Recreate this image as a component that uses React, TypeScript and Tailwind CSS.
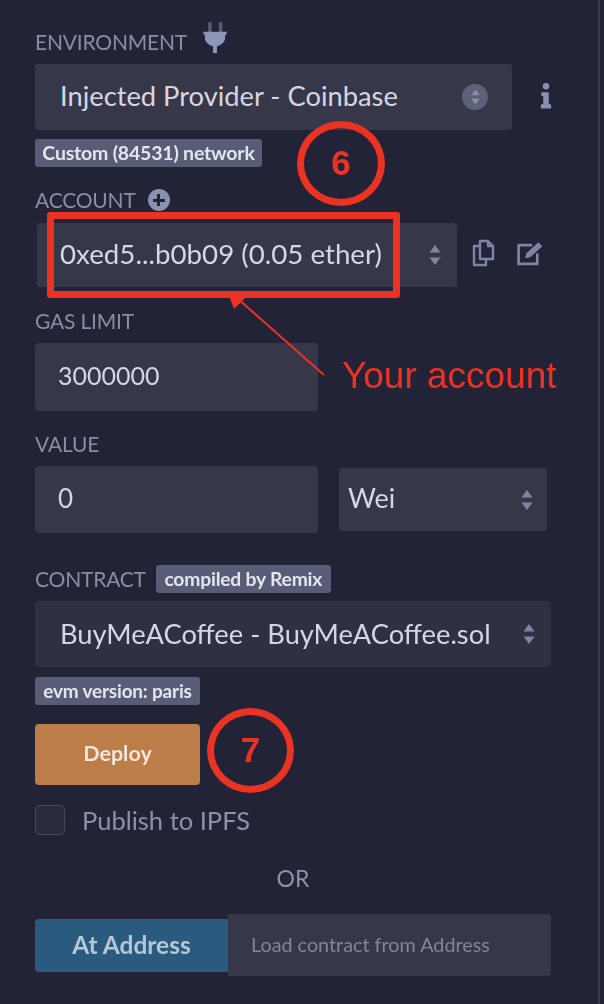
import React from 'react';

const font = "font-['Lato','Noto_Sans',sans-serif]";

const Arrows = ({ className = '' }: { className?: string }) => (
  <svg viewBox="0 0 12 24" className={`w-[12px] h-[24px] ${className}`} fill="#7f84a3">
    <path d="M6 2 L11.5 9.5 H0.5 Z" />
    <path d="M6 22 L11.5 14.5 H0.5 Z" />
  </svg>
);

const Label = ({ children }: { children: React.ReactNode }) => (
  <span className="text-[21px] leading-[24px] text-[#8a8da3] tracking-[-0.2px]">{children}</span>
);

const Badge = ({ children, className = '' }: { children: React.ReactNode; className?: string }) => (
  <span className={`flex items-center justify-center h-[28px] rounded-[3px] bg-[#595c76] text-[#e4e5ee] font-bold tracking-[-0.2px] ${className}`}>
    {children}
  </span>
);

const App = () => {
  return (
    <div className={`relative flex w-[604px] h-[1004px] overflow-hidden bg-[#222336] ${font}`}>
      {/* the panel, slightly soft like the upscaled capture */}
      <div className="flex flex-col pl-[35px] pt-[22px] w-[598px] h-full blur-[0.7px]">
        <div className="flex items-center h-[40px]">
          <Label>ENVIRONMENT</Label>
          <svg viewBox="0 0 24 32" className="ml-[16px] w-[24px] h-[31px] mb-[9px]" fill="#8f96bb">
            <rect x="5" y="0" width="3.5" height="11" rx="1.5" fill="#5a5d7a" />
            <rect x="16" y="0" width="3.5" height="11" rx="1.5" fill="#5a5d7a" />
            <path d="M0 10 H24 V13 H22.5 V16 C22.5 21 18 24 14 25 V32 H10 V25 C6 24 1.5 21 1.5 16 V13 H0 Z" />
          </svg>
        </div>

        <div className="flex items-center mt-[2px]">
          <div className="flex items-center justify-between w-[477px] h-[66px] pl-[25px] pr-[24px] bg-[#363749] rounded-[3px]">
            <span className="pb-[2px] text-[27.3px] text-[#d6d7e2]">Injected Provider - Coinbase</span>
            <span className="flex items-center justify-center w-[26px] h-[26px] rounded-full bg-[#5e6179]">
              <svg viewBox="0 0 12 24" className="w-[11px] h-[20px]" fill="#8c90ab">
                <path d="M6 3 L11 10 H1 Z" />
                <path d="M6 21 L11 14 H1 Z" />
              </svg>
            </span>
          </div>
          <svg viewBox="0 0 12 28" className="ml-[28px] w-[12px] h-[26px] mb-[2px]" fill="#8b90b0">
            <circle cx="6" cy="3.5" r="3.5" />
            <path d="M1 10 H9 V23 H11.5 V27.5 H0.5 V23 H3 V14 H1 Z" />
          </svg>
        </div>

        <Badge className="w-[227px] mt-[9px] text-[19.5px]">Custom (84531) network</Badge>

        <div className="flex items-center h-[24px] mt-[21px]">
          <Label>ACCOUNT</Label>
          <span className="relative ml-[12px] w-[22px] h-[22px] rounded-full bg-[#8b90b0]">
            <span className="absolute left-[5px] top-[9.5px] w-[12px] h-[3px] bg-[#222336]" />
            <span className="absolute left-[9.5px] top-[5px] w-[3px] h-[12px] bg-[#222336]" />
          </span>
        </div>

        <div className="flex items-center mt-[11px]">
          <div className="flex items-center justify-between ml-[2px] w-[420px] h-[64px] pl-[23px] pr-[16px] bg-[#363749] rounded-[3px]">
            <span className="pb-[2px] text-[27.7px] text-[#d6d7e2]">0xed5...b0b09 (0.05 ether)</span>
            <Arrows />
          </div>
          <svg viewBox="0 0 24 28" className="ml-[14px] w-[24px] h-[28px] mb-[4px]" fill="none" stroke="#7f84a3" strokeWidth="2.4" strokeLinejoin="round">
            <path d="M9 2 H17 L22 7 V20 H9 Z" />
            <path d="M17 2 V7 H22" />
            <path d="M9 7 H3 V26 H15 V20" />
          </svg>
          <svg viewBox="0 0 28 26" className="ml-[20px] w-[30px] h-[27px] mb-[4px]" fill="none" stroke="#7f84a3" strokeWidth="2.6" strokeLinejoin="round">
            <path d="M16 5 H3 V23 H21 V13" />
            <path d="M10 17 L11 13 L22 3 L25 6 L14 16 Z" fill="#7f84a3" strokeWidth="1.2" />
          </svg>
        </div>

        <div className="mt-[22px] h-[24px] leading-[24px]">
          <Label>GAS LIMIT</Label>
        </div>
        <div className="flex items-center w-[283px] h-[68px] mt-[10px] pl-[23px] pb-[3px] bg-[#363749] rounded-[4px] text-[25px] text-[#d6d7e2]">
          3000000
        </div>

        <div className="mt-[21px] h-[24px] leading-[24px]">
          <Label>VALUE</Label>
        </div>
        <div className="flex items-center mt-[10px]">
          <div className="flex items-center w-[283px] h-[67px] pl-[23px] pb-[3px] bg-[#363749] rounded-[4px] text-[26px] text-[#d6d7e2]">
            0
          </div>
          <div className="flex items-center justify-between ml-[21px] w-[208px] h-[63px] pl-[9px] pr-[14px] bg-[#363749] rounded-[3px]">
            <span className="pb-[2px] text-[27px] text-[#d6d7e2]">Wei</span>
            <Arrows />
          </div>
        </div>

        <div className="flex items-center mt-[32px] h-[28px]">
          <Label>CONTRACT</Label>
          <Badge className="w-[175px] ml-[10px] text-[19.3px]">compiled by Remix</Badge>
        </div>

        <div className="flex items-center justify-between w-[516px] h-[66px] mt-[8px] pl-[25px] pr-[16px] bg-[#2f3042] rounded-[4px]">
          <span className="text-[27.3px] text-[#d6d7e2]">BuyMeACoffee - BuyMeACoffee.sol</span>
          <Arrows />
        </div>

        <Badge className="w-[165px] h-[27px] mt-[10px] text-[19px]">evm version: paris</Badge>

        <button className="w-[165px] h-[61px] mt-[19px] pb-[3px] rounded-[4px] bg-[#bd7d48] text-[21.5px] font-bold text-[#f3e7dc]">
          Deploy
        </button>

        <div className="flex items-center h-[30px] mt-[20px]">
          <span className="w-[30px] h-[30px] rounded-[4px] bg-[#2b2c40] border border-[#45475f]" />
          <span className="ml-[17px] text-[25.5px] text-[#8f91a8]">Publish to IPFS</span>
        </div>

        <div className="w-[516px] mt-[25px] h-[36px] leading-[36px] text-center text-[23px] text-[#8f91a8]">OR</div>

        <div className="flex items-center mt-[18px]">
          <button className="w-[193px] h-[53px] rounded-l-[4px] bg-[#2a5a7e] text-[24.5px] font-bold text-[#b6c6d6]">
            At Address
          </button>
          <div className="flex items-center w-[323px] h-[62px] pl-[23px] bg-[#363749] rounded-r-[4px] text-[19.8px] text-[#83859b]">
            Load contract from Address
          </div>
        </div>
      </div>

      {/* edge of the side panel */}
      <div className="w-[2px] h-full bg-[#3a3b50]" />

      {/* annotations drawn on top of the screenshot */}
      <div className="absolute left-[47px] top-[212px] w-[353px] h-[86px] border-[7px] border-[#ea3323] rounded-[3px]" />
      <div className="absolute left-[297px] top-[121px] w-[88px] h-[85px] flex items-center justify-center rounded-[50%] border-[7px] border-[#ea3323] text-[35px] font-['Liberation_Sans',sans-serif] font-bold text-[#ea3323]">
        6
      </div>
      <div className="absolute left-[207px] top-[708px] w-[87px] h-[85px] flex items-center justify-center rounded-[50%] border-[7px] border-[#ea3323] text-[35px] font-['Liberation_Sans',sans-serif] font-bold text-[#ea3323]">
        7
      </div>
      <svg className="absolute left-[225px] top-[290px] w-[110px] h-[95px]" viewBox="0 0 110 95" fill="none">
        <path d="M99 85 L12 8" stroke="#ea3323" strokeWidth="2" />
        <path d="M3 3 L20 8 L9 19 Z" fill="#ea3323" />
      </svg>
      <span className="absolute left-[342px] top-[354px] text-[37px] leading-[44px] font-['Liberation_Sans',sans-serif] text-[#ea3323]">
        Your account
      </span>
    </div>
  );
};

export default App;
